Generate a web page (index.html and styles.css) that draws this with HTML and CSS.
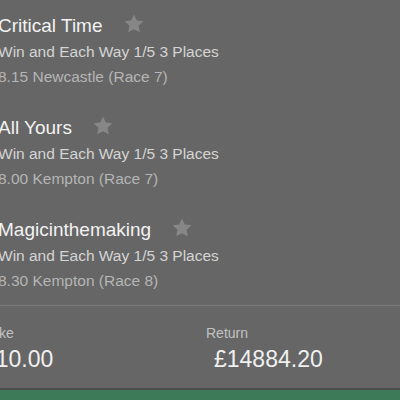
FILE: index.html
```html
<!DOCTYPE html>
<html lang="en">

<head>
    <meta charset="UTF-8">
    <meta name="viewport" content="width=device-width, initial-scale=1.0">
    <title>Bet Slip</title>

    <link rel="stylesheet" href="styles.css">
</head>

<body>
    <div id="slip">
        <div class="selections">
            <div class="selection">
                <div class="runner">Critical Time
                    <svg class="star" viewBox="0 0 24 24"><path d="M12 1.5l3.1 6.6 7.2.9-5.3 5 1.4 7.1L12 17.6l-6.4 3.5 1.4-7.1-5.3-5 7.2-.9z"/></svg>
                </div>
                <div class="market">Win and Each Way 1/5 3 Places</div>
                <div class="event">8.15 Newcastle (Race 7)</div>
            </div>
            <div class="selection">
                <div class="runner">All Yours
                    <svg class="star" viewBox="0 0 24 24"><path d="M12 1.5l3.1 6.6 7.2.9-5.3 5 1.4 7.1L12 17.6l-6.4 3.5 1.4-7.1-5.3-5 7.2-.9z"/></svg>
                </div>
                <div class="market">Win and Each Way 1/5 3 Places</div>
                <div class="event">8.00 Kempton (Race 7)</div>
            </div>
            <div class="selection">
                <div class="runner">Magicinthemaking
                    <svg class="star" viewBox="0 0 24 24"><path d="M12 1.5l3.1 6.6 7.2.9-5.3 5 1.4 7.1L12 17.6l-6.4 3.5 1.4-7.1-5.3-5 7.2-.9z"/></svg>
                </div>
                <div class="market">Win and Each Way 1/5 3 Places</div>
                <div class="event">8.30 Kempton (Race 8)</div>
            </div>
        </div>

        <div class="totals">
            <div class="total">
                <div class="label">Stake</div>
                <div class="amount">£10.00</div>
            </div>
            <div class="total return">
                <div class="label">Return</div>
                <div class="amount">£14884.20</div>
            </div>
        </div>

        <div class="place-bet"></div>
    </div>
</body>

</html>
```

FILE: styles.css
```css
body {
    margin: 0;
    width: 400px;
    height: 400px;
    overflow: hidden;
    background-color: #666;
    font-family: "Liberation Sans", Arial, sans-serif;
}

#slip {
    display: flex;
    flex-direction: column;
    height: 400px;
}

.selections {
    display: flex;
    flex-direction: column;
    gap: 26px;
    padding-top: 13px;
    margin-left: -2px;
    padding-bottom: 12px;
}

.runner {
    display: flex;
    align-items: center;
    gap: 20px;
    font-size: 19px;
    line-height: 26px;
    color: #f2f2f2;
}

.star {
    width: 22px;
    height: 22px;
    margin-top: -4px;
    fill: #878787;
}

.market {
    font-size: 15.5px;
    line-height: 25px;
    color: #d4d4d4;
}

.event {
    font-size: 15.5px;
    line-height: 25px;
    color: #b5b5b5;
}

.totals {
    display: grid;
    grid-template-columns: 228px 1fr;
    border-top: 1px solid #7a7a7a;
    margin-left: -22px;
    padding-top: 18px;
    flex: 1;
}

.label {
    font-size: 14px;
    line-height: 18px;
    color: #c2c2c2;
}

.amount {
    margin-top: 3px;
    padding-left: 5px;
    font-size: 23px;
    line-height: 28px;
    color: #f0f0f0;
}

.return .amount {
    padding-left: 8px;
}

.place-bet {
    height: 10px;
    border-top: 2px solid #4a4f4b;
    background-color: #3d7a57;
}
```
